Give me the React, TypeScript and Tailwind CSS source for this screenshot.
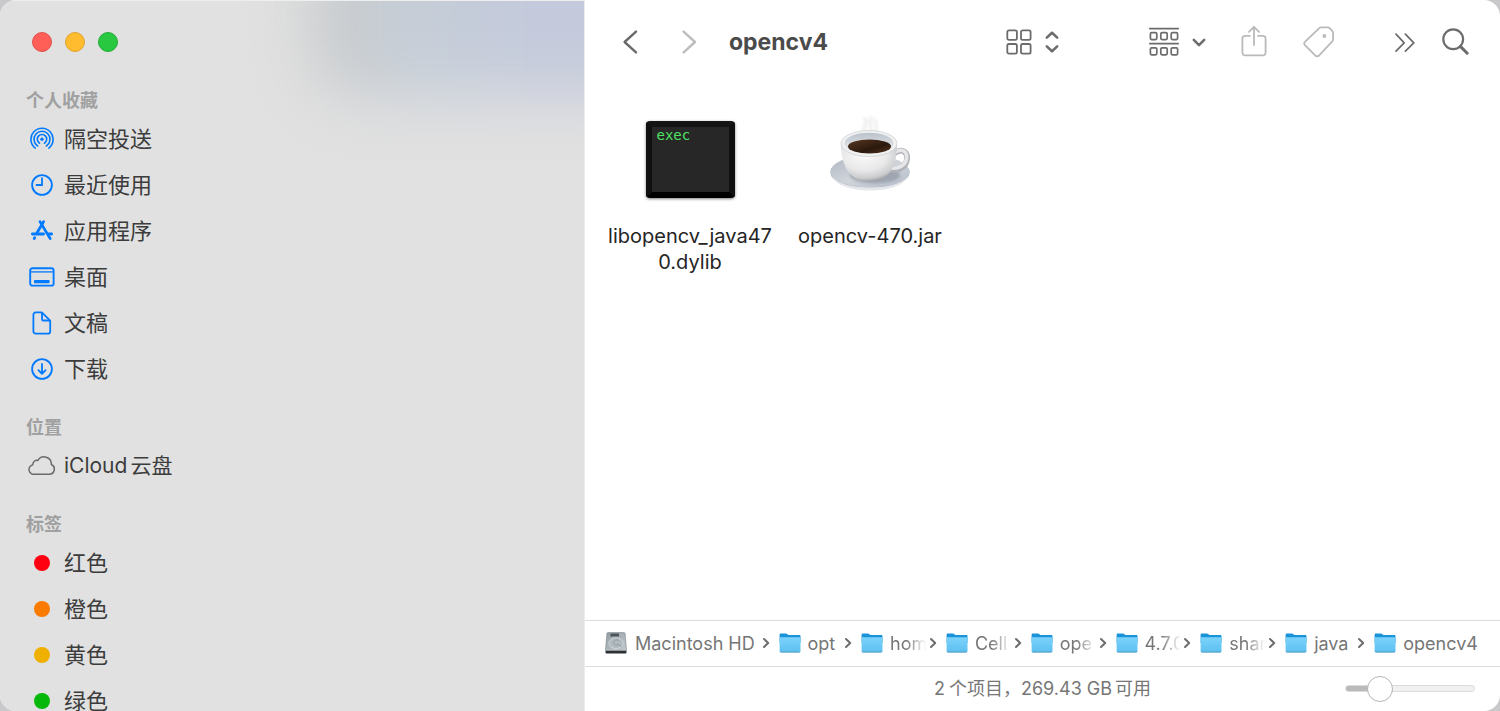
import { Fragment, useState } from 'react';
import type { ReactNode } from 'react';

function AirDropIcon() {
  return (
    <svg width="24" height="24" viewBox="0 0 24 24" fill="none" stroke="#007aff" strokeWidth="1.6" strokeLinecap="round">
      <circle cx="12" cy="12.2" r="1.7" fill="#007aff" stroke="none" />
      <path d="M9.6 16.2a4.7 4.7 0 1 1 4.8 0" />
      <path d="M7.6 19a8 8 0 1 1 8.8 0" />
      <path d="M5.2 21.1a11.1 11.1 0 1 1 13.6 0" />
    </svg>
  );
}

function ClockIcon() {
  return (
    <svg width="24" height="24" viewBox="0 0 24 24" fill="none" stroke="#007aff" strokeWidth="1.8" strokeLinecap="round">
      <circle cx="12" cy="12" r="9.9" />
      <path d="M12 5.2V12H6.5" />
    </svg>
  );
}

function AppsIcon() {
  return (
    <svg width="24" height="24" viewBox="0 0 24 24" fill="none" stroke="#007aff" strokeWidth="2.8" strokeLinecap="round">
      <path d="M10 2.6 20.2 19.6" />
      <path d="M13.6 2.6 6.9 14" />
      <path d="M2.4 15h11.2M19 15h2.6" />
      <path d="M4.7 18.7l-.5.8" />
    </svg>
  );
}

function DesktopIcon() {
  return (
    <svg width="26" height="20" viewBox="0 0 26 20" fill="none" stroke="#007aff" strokeWidth="1.9">
      <rect x="1.2" y="1.2" width="23.4" height="17.4" rx="2.2" />
      <path d="M1.2 4.9h23.4" strokeWidth="1.3" />
      <rect x="5" y="13" width="15.6" height="3.2" rx=".8" fill="#007aff" stroke="none" />
    </svg>
  );
}

function DocumentIcon() {
  return (
    <svg width="20" height="24" viewBox="0 0 20 24" fill="none" stroke="#007aff" strokeWidth="1.8" strokeLinejoin="round">
      <path d="M3.6 1.4h6.2l8.4 8.2v10.8a2.2 2.2 0 0 1-2.2 2.2H3.6a2.2 2.2 0 0 1-2.2-2.2V3.6a2.2 2.2 0 0 1 2.2-2.2Z" />
      <path d="M10 1.8v6.4a1.3 1.3 0 0 0 1.3 1.3h6.5" />
    </svg>
  );
}

function DownloadIcon() {
  return (
    <svg width="24" height="24" viewBox="0 0 24 24" fill="none" stroke="#007aff" strokeWidth="1.8" strokeLinecap="round" strokeLinejoin="round">
      <circle cx="12" cy="12" r="9.9" />
      <path d="M12 7v9.8M8.4 13.2l3.6 3.6 3.6-3.6" />
    </svg>
  );
}

function CloudIcon() {
  return (
    <svg width="28" height="20" viewBox="0 0 28 20" fill="none" stroke="#6b6b6b" strokeWidth="1.5" strokeLinejoin="round">
      <path d="M7 18.2h14.2a5.1 5.1 0 0 0 2.2-9.7A7.3 7.3 0 0 0 9.9 4.4a4.2 4.2 0 0 0-5.1 4.3A4.8 4.8 0 0 0 7 18.2Z" />
    </svg>
  );
}

function Dot({ color }: { color: string }) {
  return <span className={`size-4 rounded-full ${color}`} />;
}

type Entry = { label: ReactNode; icon: ReactNode };

const sections: { title: string; entries: Entry[] }[] = [
  {
    title: '个人收藏',
    entries: [
      { label: '隔空投送', icon: <AirDropIcon /> },
      { label: '最近使用', icon: <ClockIcon /> },
      { label: '应用程序', icon: <AppsIcon /> },
      { label: '桌面', icon: <DesktopIcon /> },
      { label: '文稿', icon: <DocumentIcon /> },
      { label: '下载', icon: <DownloadIcon /> },
    ],
  },
  {
    title: '位置',
    entries: [
      {
        label: (
          <span className="flex items-center gap-[3px] text-[21px]">
            <span>iCloud</span>
            <span>云盘</span>
          </span>
        ),
        icon: <CloudIcon />,
      },
    ],
  },
  {
    title: '标签',
    entries: [
      { label: '红色', icon: <Dot color="bg-[#ff0010]" /> },
      { label: '橙色', icon: <Dot color="bg-[#fb7a00]" /> },
      { label: '黄色', icon: <Dot color="bg-[#f0b000]" /> },
      { label: '绿色', icon: <Dot color="bg-[#06b80a]" /> },
    ],
  },
];

function Sidebar() {
  return (
    <aside className="relative w-[39%] shrink-0 overflow-hidden border-t border-r border-t-[#eeeeee] border-r-[#ececec] bg-[#e1e1e1]">
      <div className="absolute -top-24 -right-24 left-[53%] h-[192px] rounded-[50px] bg-linear-to-r from-[#c8cacb] from-5% via-[#c6ced7] via-25% to-[#c4cadb] to-60% blur-[30px]" />
      <div className="relative">
        <div className="flex gap-[13px] px-8 pt-[31px]">
          <button aria-label="关闭" className="size-5 rounded-full border border-[#e2504a] bg-[#ff5f57]" />
          <button aria-label="最小化" className="size-5 rounded-full border border-[#e0a32b] bg-[#febc2e]" />
          <button aria-label="缩放" className="size-5 rounded-full border border-[#22ac35] bg-[#28c840]" />
        </div>
        <nav className="flex flex-col gap-[21px] pt-[34px]">
          {sections.map((section) => (
            <section key={section.title}>
              <h2 className="flex h-[30px] items-center px-[26px] text-lg font-bold text-[#a0a0a0]">{section.title}</h2>
              <ul>
                {section.entries.map((entry, index) => (
                  <li key={index}>
                    <a href="#" className="flex h-[46px] items-center gap-2 pl-7 text-[22px] leading-7 text-[#3c3c3c]">
                      <span className="flex w-7 justify-center">{entry.icon}</span>
                      <span>{entry.label}</span>
                    </a>
                  </li>
                ))}
              </ul>
            </section>
          ))}
        </nav>
      </div>
    </aside>
  );
}

function Toolbar() {
  return (
    <header className="flex h-[84px] shrink-0 items-center px-[30px]">
      <button aria-label="后退" className="flex w-[30px] justify-center">
        <svg width="16" height="26" viewBox="0 0 16 26" fill="none" stroke="#6a6a6a" strokeWidth="2.4" strokeLinecap="round" strokeLinejoin="round">
          <path d="M14 2.6 2.6 13 14 23.4" />
        </svg>
      </button>
      <button aria-label="前进" disabled className="ml-[29px] flex w-[30px] justify-center">
        <svg width="16" height="26" viewBox="0 0 16 26" fill="none" stroke="#bdbdbd" strokeWidth="2.4" strokeLinecap="round" strokeLinejoin="round">
          <path d="M2.6 2.6 14 13 2.6 23.4" />
        </svg>
      </button>
      <h1 className="ml-[25px] text-[23px] font-bold text-[#4b4b4b]">opencv4</h1>
      <div className="ml-auto flex items-center">
        <button aria-label="显示方式" className="mr-[89px] flex items-center gap-3">
          <svg width="26" height="26" viewBox="0 0 26 26" fill="none" stroke="#6c6c6c" strokeWidth="1.8">
            <rect x="1.3" y="1.3" width="9.6" height="9.6" rx="1.6" />
            <rect x="15" y="1.3" width="9.6" height="9.6" rx="1.6" />
            <rect x="1.3" y="15" width="9.6" height="9.6" rx="1.6" />
            <rect x="15" y="15" width="9.6" height="9.6" rx="1.6" />
          </svg>
          <svg width="16" height="24" viewBox="0 0 16 24" fill="none" stroke="#6c6c6c" strokeWidth="2.6" strokeLinecap="round" strokeLinejoin="round">
            <path d="M2.8 7.6 8 2.8l5.2 4.8M2.8 16.4l5.2 4.8 5.2-4.8" />
          </svg>
        </button>
        <button aria-label="分组" className="mr-[34px] flex items-center gap-3">
          <svg width="30" height="30" viewBox="0 0 30 30" fill="none" stroke="#6c6c6c" strokeWidth="1.7">
            <path d="M.8 1.6h28.4M.8 16.6h28.4" strokeLinecap="round" />
            <rect x="1.4" y="5.6" width="6.4" height="7" rx="1.3" />
            <rect x="11.8" y="5.6" width="6.4" height="7" rx="1.3" />
            <rect x="22.2" y="5.6" width="6.4" height="7" rx="1.3" />
            <rect x="1.4" y="20.8" width="6.4" height="7" rx="1.3" />
            <rect x="11.8" y="20.8" width="6.4" height="7" rx="1.3" />
            <rect x="22.2" y="20.8" width="6.4" height="7" rx="1.3" />
          </svg>
          <svg width="16" height="12" viewBox="0 0 16 12" fill="none" stroke="#6c6c6c" strokeWidth="2.6" strokeLinecap="round" strokeLinejoin="round">
            <path d="M2.8 3.9 8 9.1l5.2-5.2" />
          </svg>
        </button>
        <button aria-label="共享" disabled className="mr-9">
          <svg width="26" height="34" viewBox="0 0 26 34" fill="none" stroke="#bababa" strokeWidth="1.8" strokeLinecap="round" strokeLinejoin="round">
            <path d="M9 10.8H4.2a2.8 2.8 0 0 0-2.8 2.8v14a2.8 2.8 0 0 0 2.8 2.8h17.6a2.8 2.8 0 0 0 2.8-2.8v-14a2.8 2.8 0 0 0-2.8-2.8H17" />
            <path d="M13 20V1.8M8 6.8l5-5 5 5" />
          </svg>
        </button>
        <button aria-label="标签" disabled className="mr-[60px]">
          <svg width="32" height="32" viewBox="0 0 32 32" fill="none" stroke="#bababa" strokeWidth="1.8" strokeLinejoin="round">
            <path d="M18.3 1.4h6.5c.7 0 1.3.3 1.8.8l2.8 3c.5.5.7 1.1.7 1.7v6.5c0 .8-.3 1.4-.8 1.9L15.9 29.6a2.4 2.4 0 0 1-3.5 0L1.9 19.2a2.3 2.3 0 0 1 0-3.3L16.3 2.2c.5-.5 1.2-.8 2-.8Z" />
            <circle cx="21.4" cy="10" r="1.9" fill="#bababa" stroke="none" />
          </svg>
        </button>
        <button aria-label="更多" className="mr-[27px]">
          <svg width="20" height="20" viewBox="0 0 20 20" fill="none" stroke="#6c6c6c" strokeWidth="1.7" strokeLinecap="round" strokeLinejoin="round">
            <path d="M1 2.2 9.2 10.8 1 19.2M10.4 2.2l8.4 8.6-8.4 8.4" />
          </svg>
        </button>
        <button aria-label="搜索">
          <svg width="28" height="28" viewBox="0 0 28 28" fill="none" stroke="#6c6c6c" strokeLinecap="round">
            <circle cx="11.2" cy="11.2" r="9.9" strokeWidth="2.2" />
            <path d="m18.6 18.6 6.6 6.6" strokeWidth="3" />
          </svg>
        </button>
      </div>
    </header>
  );
}

function CoffeeIcon() {
  return (
    <svg width="92" height="92" viewBox="0 0 92 92" fill="none">
      <defs>
        <linearGradient id="saucer" x1="0" y1="0" x2="1" y2="1">
          <stop offset="0" stopColor="#aeb7c3" />
          <stop offset=".5" stopColor="#d0d4da" />
          <stop offset="1" stopColor="#b4bdcb" />
        </linearGradient>
        <radialGradient id="cup" cx=".42" cy=".3" r=".72">
          <stop offset="0" stopColor="#fafafa" />
          <stop offset=".55" stopColor="#e9e9ea" />
          <stop offset=".85" stopColor="#cbccce" />
          <stop offset="1" stopColor="#97999d" />
        </radialGradient>
        <linearGradient id="rim" x1="0" y1="0" x2="0" y2="1">
          <stop offset="0" stopColor="#b9c1ca" />
          <stop offset="1" stopColor="#f4f4f4" />
        </linearGradient>
        <linearGradient id="coffee" x1="0" y1="0" x2="1" y2="1">
          <stop offset="0" stopColor="#5a3823" />
          <stop offset=".6" stopColor="#2b190e" />
          <stop offset="1" stopColor="#553320" />
        </linearGradient>
        <filter id="soft" x="-50%" y="-50%" width="200%" height="200%">
          <feGaussianBlur stdDeviation="1.6" />
        </filter>
      </defs>
      <g stroke="#d7d7d7" strokeWidth="2.6" opacity=".5" filter="url(#soft)" strokeLinecap="round">
        <path d="M40 21c-2-6 4-8 1-16M46 22c3-7-2-9 1-18M52 21c-1-5 2-8-1-14" />
      </g>
      <ellipse cx="46" cy="59.5" rx="39.6" ry="16.5" fill="#a9b0bb" />
      <ellipse cx="46" cy="58.5" rx="39.6" ry="16" fill="url(#saucer)" />
      <path d="M8 63c7 8.5 21 11.500 38 11.500S77 71.500 84 63c-4 10-20 14.500-38 14.500S12 73 8 63Z" fill="#e6e7ea" />
      <ellipse cx="51" cy="62" rx="25" ry="8.5" fill="#7f8793" opacity=".55" filter="url(#soft)" />
      <path d="M71 40c7-5 13-1 12 6-1 8-8 12-16 10" stroke="#b0b3b8" strokeWidth="5.8" strokeLinecap="round" />
      <path d="M71 39.500c7-5 12.500-1 11.500 6C81.500 53 74 56 67 55" stroke="#e6e6e8" strokeWidth="3.6" strokeLinecap="round" />
      <path d="M17 31c0 16 5 37.500 28.500 37.500S73 47 73 31Z" fill="url(#cup)" />
      <ellipse cx="45" cy="30.5" rx="28" ry="13" fill="#f1f1f2" stroke="#c9cbce" strokeWidth=".7" />
      <ellipse cx="45" cy="30.5" rx="24.5" ry="10.8" fill="url(#rim)" />
      <ellipse cx="45.5" cy="33.5" rx="21.5" ry="7" fill="url(#coffee)" />
    </svg>
  );
}

function FileGrid() {
  return (
    <main className="flex flex-1 items-start px-[15px] pt-[27px]">
      <figure className="flex w-[180px] flex-col items-center">
        <div className="flex h-24 items-center">
          <div className="h-[77px] w-[89px] rounded-sm border-[6px] border-t-[#141414] border-r-[#101010] border-b-black border-l-[#101010] bg-[#272727] pl-[5px] shadow-[0_1px_3px_rgba(0,0,0,0.5)]">
            <p className="font-['DejaVu_Sans_Mono',monospace] text-sm leading-4 text-[#4ee264]">exec</p>
          </div>
        </div>
        <figcaption className="mt-4 w-[164px] text-center text-[20px] leading-[26px] break-all text-[#252525]">libopencv_java470.dylib</figcaption>
      </figure>
      <figure className="flex w-[180px] flex-col items-center">
        <div className="flex h-24 items-center">
          <CoffeeIcon />
        </div>
        <figcaption className="mt-4 text-center text-[20px] leading-[26px] text-[#252525]">opencv-470.jar</figcaption>
      </figure>
    </main>
  );
}

function FolderIcon() {
  return (
    <svg width="22" height="20" viewBox="0 0 22 20" className="shrink-0">
      <defs>
        <linearGradient id="folder" x1="0" y1="0" x2="0" y2="1">
          <stop offset="0" stopColor="#7bd3fb" />
          <stop offset="1" stopColor="#5dbff0" />
        </linearGradient>
      </defs>
      <path d="M.6 1.9C.6 1 1.1.5 2 .5h4.8c.8 0 1.2.3 1.7.8l.8.6h11c.8 0 1.2.5 1.2 1.3V10H.6Z" fill="#1b93d8" />
      <path d="M.6 4.2h20.9v13.9c0 .8-.5 1.3-1.3 1.3H1.9c-.8 0-1.3-.5-1.3-1.3Z" fill="url(#folder)" />
      <path d="M.8 18.6c.2.5.6.8 1.1.8h18.3c.5 0 .9-.3 1.1-.8Z" fill="#5a9fc4" />
    </svg>
  );
}

function DiskIcon() {
  return (
    <svg width="22" height="22" viewBox="0 0 22 22" className="shrink-0">
      <defs>
        <linearGradient id="disk" x1="0" y1="0" x2="1" y2="1">
          <stop offset="0" stopColor="#939da3" />
          <stop offset="1" stopColor="#c3cacf" />
        </linearGradient>
      </defs>
      <path d="M3 .6h16c.6 0 1 .3 1.1.9L21.5 18H.5L1.9 1.5C2 .9 2.4.6 3 .6Z" fill="url(#disk)" stroke="#7a858b" strokeWidth=".6" />
      <path d="M5.4 1.5h8.600v3H5.400Z" fill="#4c565b" />
      <ellipse cx="11" cy="11.2" rx="7.2" ry="5.4" fill="#b2bbc0" stroke="#d3d9dc" strokeWidth=".8" />
      <path d="M14.6 9c-2-2-6-1.200-6 1.800 0 2.600 3.400 3 5 1.700M12 11.500l4.500 3.200" fill="none" stroke="#8b969c" strokeWidth=".8" />
      <path d="M.5 18.3h21v1.9c0 .9-.5 1.3-1.5 1.3H2c-1 0-1.5-.4-1.500-1.300Z" fill="#2c3133" />
      <path d="M.5 17.5h21v1H.5Z" fill="#cfd5d8" />
    </svg>
  );
}

const crumbs = [
  { name: 'opt', faded: false },
  { name: 'hom', faded: true },
  { name: 'Cell', faded: true },
  { name: 'ope', faded: true },
  { name: '4.7.0', faded: true },
  { name: 'shar', faded: true },
  { name: 'java', faded: false },
  { name: 'opencv4', faded: false },
];

function Separator() {
  return (
    <svg width="8" height="12" viewBox="0 0 8 12" fill="none" stroke="#6c6c6c" strokeWidth="2" strokeLinecap="round" strokeLinejoin="round" className="mr-1.5 shrink-0">
      <path d="M2 2l4.200 4L2 10" />
    </svg>
  );
}

function PathBar() {
  return (
    <nav aria-label="路径" className="flex h-[46px] shrink-0 items-center justify-between border-t border-[#dcdcdc] pr-[22px] pb-px pl-5 text-[18px] whitespace-nowrap text-[#767676]">
      <a href="#" className="flex items-center gap-2 pr-1">
        <DiskIcon />
        <span>Macintosh HD</span>
      </a>
      {crumbs.map((crumb) => (
        <Fragment key={crumb.name}>
          <Separator />
          <a href="#" className="flex items-center gap-[7px]">
            <FolderIcon />
            {crumb.faded ? (
              <span className="w-9 overflow-hidden [mask-image:linear-gradient(to_right,black_45%,transparent)]">{crumb.name}</span>
            ) : (
              <span className={crumb.name === 'opencv4' ? '' : 'pr-1.5'}>{crumb.name}</span>
            )}
          </a>
        </Fragment>
      ))}
    </nav>
  );
}

function StatusBar() {
  const [size, setSize] = useState(21);
  return (
    <footer className="grid h-[45px] shrink-0 grid-cols-[1fr_auto_1fr] items-center border-t border-[#dcdcdc] px-[25px] pb-px text-[18px] text-[#767676]">
      <p className="col-start-2 flex items-center">
        <span className="mr-1">2</span>
        <span>个项目，</span>
        <span className="mr-[3px]">269.43 GB</span>
        <span>可用</span>
      </p>
      <input
        type="range"
        aria-label="图标大小"
        min={0}
        max={100}
        value={size}
        onChange={(event) => setSize(Number(event.target.value))}
        className="h-[7px] w-[130px] appearance-none justify-self-end rounded-full border border-[#dadada] [&::-webkit-slider-thumb]:size-[26px] [&::-webkit-slider-thumb]:appearance-none [&::-webkit-slider-thumb]:rounded-full [&::-webkit-slider-thumb]:border [&::-webkit-slider-thumb]:border-[#b4b4b4] [&::-webkit-slider-thumb]:bg-white"
        style={{ background: `linear-gradient(to right, #bababa ${size}%, #f0f0f0 ${size}%)` }}
      />
    </footer>
  );
}

export default function App() {
  return (
    <div className="h-screen bg-[#c9c9cc] font-['Inter','Noto_Sans_CJK_SC',sans-serif]">
      <div className="flex h-full overflow-hidden rounded-2xl bg-white">
        <Sidebar />
        <div className="flex min-w-0 flex-1 flex-col">
          <Toolbar />
          <FileGrid />
          <PathBar />
          <StatusBar />
        </div>
      </div>
    </div>
  );
}
